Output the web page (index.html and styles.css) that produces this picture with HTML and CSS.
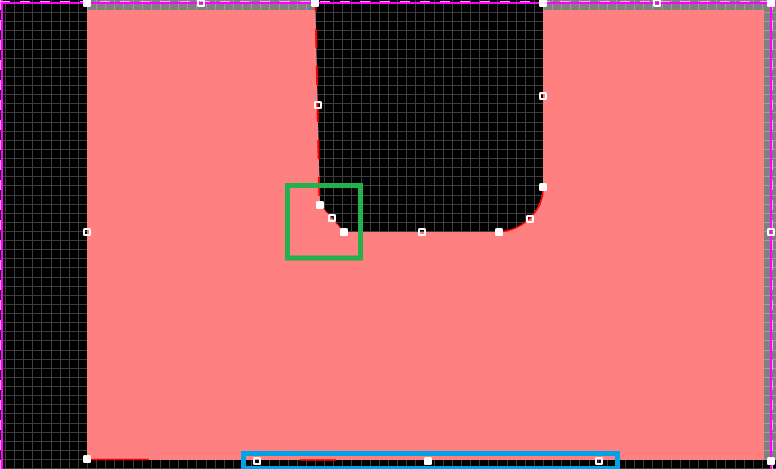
FILE: index.html
```html
<!DOCTYPE html>
<html>
<head>
<meta charset="utf-8">
<title>Glyph editor</title>
<link rel="stylesheet" href="styles.css">
</head>
<body>
<main class="canvas">
<svg class="stage" width="776" height="469" viewBox="0 0 776 469" xmlns="http://www.w3.org/2000/svg">
  <defs>
    <clipPath id="inner"><rect x="0" y="10" width="764" height="459"/></clipPath>
    <g id="on"><rect class="pt-on" x="-4" y="-4" width="8" height="8" rx="1.5"/></g>
    <g id="off"><rect class="pt-off" x="-3" y="-3" width="6" height="6" rx="0.5"/></g>
  </defs>

  <path class="glyph-gray" d="M87 0 H315 L320 205 L332 218 L344 232 H499 C522 232 543 210 543 187 V0 H776 V460 H87 Z"/>
  <path id="grid" class="grid" d=""/>
  <path class="glyph-pink" clip-path="url(#inner)" d="M87 0 H315 L320 205 L332 218 L344 232 H499 C522 232 543 210 543 187 V0 H776 V460 H87 Z"/>

  <path class="edge-dash" d="M315.5 3 L319.5 205"/>
  <path class="edge-dot" d="M320 205 L332 218 L344 232"/>
  <path class="edge-red" d="M503 231.5 C524 229 543 210 543 190"/>
  <path class="edge-red" d="M90 459.5 H149"/>
  <path class="edge-red" d="M300 460 H336"/>

  <path class="bound" d="M0 3 H776 M2 0 V469 M771 0 V469"/>
  <path class="bound-dash" d="M0 1.5 H776 M0.5 0 V469 M772.5 0 V469"/>

  <use href="#on" x="87" y="3"/>
  <use href="#off" x="201" y="3"/>
  <use href="#on" x="315" y="3"/>
  <use href="#off" x="318" y="105"/>
  <use href="#on" x="320" y="205"/>
  <use href="#off" x="332" y="218"/>
  <use href="#on" x="344" y="232"/>
  <use href="#off" x="422" y="232"/>
  <use href="#on" x="499" y="232"/>
  <use href="#off" x="530" y="219"/>
  <use href="#on" x="543" y="187"/>
  <use href="#off" x="543" y="96"/>
  <use href="#on" x="543" y="3"/>
  <use href="#off" x="657" y="3"/>
  <use href="#on" x="771" y="3"/>
  <use href="#off" x="771" y="232"/>
  <use href="#on" x="771" y="461"/>
  <use href="#off" x="599" y="461"/>
  <use href="#on" x="428" y="461"/>
  <use href="#off" x="257" y="461"/>
  <use href="#on" x="87" y="459"/>
  <use href="#off" x="87" y="232"/>

  <rect class="mark-green" x="287.5" y="185.5" width="73" height="72.5"/>
  <rect class="mark-blue" x="243.5" y="453.5" width="374" height="15"/>
</svg>
</main>
<script src="app.js"></script>
</body>
</html>
```

FILE: styles.css
```css
html, body {
  margin: 0;
  padding: 0;
  background: #000;
  overflow: hidden;
  font-family: "Liberation Sans", sans-serif;
}
.canvas {
  width: 776px;
  height: 469px;
}
.stage {
  display: block;
}
.glyph-gray {
  fill: #808080;
}
.glyph-pink {
  fill: #ff8080;
}
.grid {
  fill: none;
  stroke: rgba(255, 255, 255, 0.24);
  stroke-width: 1;
  shape-rendering: crispEdges;
}
.edge-dash {
  fill: none;
  stroke: #ff0000;
  stroke-width: 2;
  stroke-dasharray: 19 18;
  stroke-dashoffset: 11;
}
.edge-dot {
  fill: none;
  stroke: #ff0000;
  stroke-width: 1.2;
  stroke-dasharray: 2 2;
}
.edge-red {
  fill: none;
  stroke: #ff0000;
  stroke-width: 1.5;
}
.bound {
  fill: none;
  stroke: #ff00ff;
  stroke-width: 2;
}
.bound-dash {
  fill: none;
  stroke: #ff9cff;
  stroke-width: 1;
  stroke-dasharray: 10 10;
}
.pt-on {
  fill: #fff;
}
.pt-off {
  fill: none;
  stroke: #fff;
  stroke-width: 2;
}
.mark-green {
  fill: none;
  stroke: #22b14c;
  stroke-width: 5;
}
.mark-blue {
  fill: none;
  stroke: #00a2e8;
  stroke-width: 5;
}
```

FILE: app.js
```js
(function () {
  var s = 9.12, d = '';
  for (var k = -9; k <= 75; k++) {
    var x = Math.round(87 + s * k) + 0.5;
    d += 'M' + x + ' 0V469';
  }
  for (var j = 0; j <= 51; j++) {
    var y = Math.round(3 + s * j) + 0.5;
    d += 'M0 ' + y + 'H776';
  }
  document.getElementById('grid').setAttribute('d', d);
})();
```
